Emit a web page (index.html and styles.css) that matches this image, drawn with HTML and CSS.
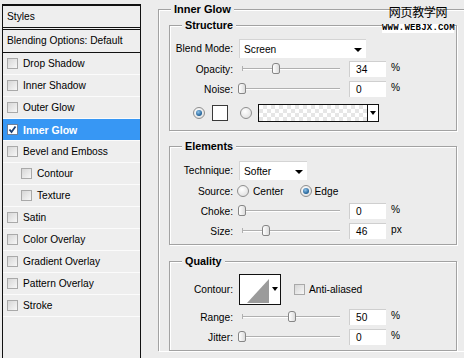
FILE: index.html
```html
<!DOCTYPE html>
<html>
<head>
  <meta charset="UTF-8">
  <title>Layer Style - Inner Glow</title>
  <link rel="stylesheet" href="styles.css">
</head>
<body>
  <div class="dialog">
    <div class="styles-list">
      <div class="list-head">Styles</div>
      <div class="list-blend">Blending Options: Default</div>
      <div class="list-item"><span class="check"></span>Drop Shadow</div>
      <div class="list-item"><span class="check"></span>Inner Shadow</div>
      <div class="list-item"><span class="check"></span>Outer Glow</div>
      <div class="list-item selected">
        <span class="check checked">
          <svg width="9" height="9" viewBox="0 0 9 9"><polyline points="1.5,4.5 3.5,7 7.5,1.5" fill="none" stroke="#1c3f73" stroke-width="1.8"/></svg>
        </span>Inner Glow
      </div>
      <div class="list-item"><span class="check"></span>Bevel and Emboss</div>
      <div class="list-item sub"><span class="check"></span>Contour</div>
      <div class="list-item sub"><span class="check"></span>Texture</div>
      <div class="list-item"><span class="check"></span>Satin</div>
      <div class="list-item"><span class="check"></span>Color Overlay</div>
      <div class="list-item"><span class="check"></span>Gradient Overlay</div>
      <div class="list-item"><span class="check"></span>Pattern Overlay</div>
      <div class="list-item"><span class="check"></span>Stroke</div>
    </div>

    <div class="options">
      <fieldset class="group outer">
        <legend>Inner Glow</legend>

        <fieldset class="group structure">
          <legend>Structure</legend>
          <div class="row tall">
            <span class="label">Blend Mode:</span>
            <div class="select blend-select">Screen<span class="arrow"></span></div>
          </div>
          <div class="row">
            <span class="label">Opacity:</span>
            <div class="slider"><span class="thumb" style="left:34px"></span></div>
            <div class="num">34</div>
            <span class="unit">%</span>
          </div>
          <div class="row">
            <span class="label">Noise:</span>
            <div class="slider"><span class="thumb" style="left:0px"></span></div>
            <div class="num">0</div>
            <span class="unit">%</span>
          </div>
          <div class="row fill-row">
            <span class="radio on"></span>
            <span class="swatch"></span>
            <span class="radio gap"></span>
            <div class="gradient"><span class="grad-arrow"><span class="arrow"></span></span></div>
          </div>
        </fieldset>

        <fieldset class="group elements">
          <legend>Elements</legend>
          <div class="row tall">
            <span class="label">Technique:</span>
            <div class="select tech-select">Softer<span class="arrow"></span></div>
          </div>
          <div class="row">
            <span class="label">Source:</span>
            <span class="radio first"></span>
            <span class="opt">Center</span>
            <span class="radio on second"></span>
            <span class="opt edge">Edge</span>
          </div>
          <div class="row">
            <span class="label">Choke:</span>
            <div class="slider"><span class="thumb" style="left:0px"></span></div>
            <div class="num">0</div>
            <span class="unit">%</span>
          </div>
          <div class="row">
            <span class="label">Size:</span>
            <div class="slider"><span class="thumb" style="left:24px"></span></div>
            <div class="num">46</div>
            <span class="unit">px</span>
          </div>
        </fieldset>

        <fieldset class="group quality">
          <legend>Quality</legend>
          <div class="row contour-row">
            <span class="label">Contour:</span>
            <div class="contour">
              <svg width="29" height="29" viewBox="0 0 29 29">
                <rect width="29" height="29" fill="#fff"/>
                <polygon points="7,28 29,4 29,28" fill="#9b9b9b"/>
              </svg>
              <span class="contour-drop"><span class="arrow"></span></span>
            </div>
            <span class="box-check"></span>
            <span class="opt">Anti-aliased</span>
          </div>
          <div class="row range-row">
            <span class="label">Range:</span>
            <div class="slider"><span class="thumb" style="left:50px"></span></div>
            <div class="num">50</div>
            <span class="unit">%</span>
          </div>
          <div class="row">
            <span class="label">Jitter:</span>
            <div class="slider"><span class="thumb" style="left:0px"></span></div>
            <div class="num">0</div>
            <span class="unit">%</span>
          </div>
        </fieldset>
      </fieldset>
    </div>

    <!-- site watermark stamped over the screenshot -->
    <div class="watermark">
      <div class="wm-cn">网页教学网</div>
      <div class="wm-url">WWW.WEBJX.COM</div>
    </div>
  </div>
</body>
</html>
```

FILE: styles.css
```css
html, body {
  margin: 0;
  padding: 0;
  height: 100%;
  background: #ececec;
  color: #000;
  font-family: 'Liberation Sans', Arial, sans-serif;
  font-size: 10.2px;
  overflow: hidden;
}
.dialog {
  position: relative;
  display: flex;
  height: 358px;
  overflow: hidden;
}

/* left: list of layer styles */
.styles-list {
  flex: none;
  width: 137px;
  height: 400px;
  margin: 4px 0 0 2px;
  border: 1px solid #111;
  border-top-width: 2px;
  background: #eeeeee;
}
.list-head {
  height: 21px;
  line-height: 21px;
  padding-left: 4px;
  border-bottom: 3px double #111;
}
.list-blend {
  height: 22px;
  line-height: 22px;
  padding-left: 4px;
  border-bottom: 1px solid #111;
}
.list-item {
  display: flex;
  align-items: center;
  height: 21px;
  padding-left: 4px;
  border-bottom: 1px solid #fbfbfb;
}
.list-item.sub {
  padding-left: 18px;
}
.list-item.selected {
  background: #3797f4;
  color: #fff;
  font-weight: bold;
  font-size: 10.5px;
}
.check {
  width: 9px;
  height: 9px;
  margin-right: 5px;
  border: 1px solid #a9a9a9;
  background: linear-gradient(135deg, #d6d6d6, #f7f7f7);
  display: flex;
}
.check.checked {
  background: #fff;
  border-color: #6f7f99;
}

/* right: options */
.options {
  flex: 1;
  padding-left: 17px;
}
.group {
  margin: 0;
  padding: 0;
  min-width: 0;
  border: 1px solid #a2a2a2;
  box-shadow: inset 1px 1px #fff, 1px 1px #fff;
}
.group legend {
  padding: 0 3px;
  margin-left: 12px;
  font-size: 10.8px;
  font-weight: bold;
  line-height: 13px;
  background: #ececec;
}
.outer {
  margin: 3px -40px 0 0;
  padding: 3px 0 0 10px;
  border-bottom: none;
}
.outer > legend {
  margin-left: 2px;
  font-size: 11px;
}
.structure, .elements, .quality {
  box-sizing: border-box;
  width: 288px;
}
.structure {
  padding: 6px 0 7px 0;
}
.elements {
  margin-top: 9px;
  padding: 7px 0 3px 0;
}
.quality {
  margin-top: 10px;
  padding: 5px 0 3px 0;
}

.row {
  display: flex;
  align-items: center;
  height: 20px;
}
.row.tall {
  height: 21px;
}
.label {
  width: 63px;
  flex: none;
  text-align: right;
}

.select {
  position: relative;
  box-sizing: border-box;
  height: 19px;
  line-height: 19px;
  margin-left: 6px;
  padding-left: 4px;
  background: #fff;
  border-top: 1px solid #d4d4d4;
  border-left: 1px solid #d4d4d4;
}
.blend-select { width: 127px; }
.tech-select { width: 68px; }
.arrow {
  width: 0;
  height: 0;
  border-left: 4px solid transparent;
  border-right: 4px solid transparent;
  border-top: 4px solid #000;
}
.select .arrow {
  position: absolute;
  right: 4px;
  top: 8px;
}

.slider {
  position: relative;
  flex: none;
  width: 102px;
  height: 12px;
  margin-left: 5px;
  background:
    linear-gradient(#b0b0b0, #b0b0b0) no-repeat 4px 3px / 1px 5px,
    linear-gradient(#b0b0b0, #b0b0b0) no-repeat 4px 5px / 98px 1px,
    linear-gradient(#fff, #fff) no-repeat 4px 6px / 98px 1px;
}
.thumb {
  position: absolute;
  top: 0;
  box-sizing: border-box;
  width: 8px;
  height: 11px;
  border: 1px solid #868686;
  border-radius: 3px 3px 2px 2px;
  background: linear-gradient(90deg, #fff, #dcdcdc);
}
.num {
  box-sizing: border-box;
  width: 37px;
  height: 16px;
  line-height: 15px;
  margin-left: 9px;
  padding-left: 6px;
  background: #fff;
  border-top: 1px solid #cfcfcf;
  border-left: 1px solid #cfcfcf;
}
.unit {
  margin-left: 5px;
  margin-top: -3px;
}

.fill-row {
  margin-top: 4px;
}
.radio {
  flex: none;
  position: relative;
  box-sizing: border-box;
  width: 12px;
  height: 12px;
  border-radius: 50%;
  border: 1px solid #8e8e8e;
  background: radial-gradient(circle at 40% 35%, #fff, #dadada);
}
.radio.on::after {
  content: '';
  position: absolute;
  left: 2px;
  top: 2px;
  width: 6px;
  height: 6px;
  border-radius: 50%;
  background: radial-gradient(circle at 40% 35%, #8fc3ea, #1f5f95 70%);
}
.fill-row .radio.on { margin-left: 23px; }
.fill-row .radio.gap { margin-left: 12px; }
.swatch {
  box-sizing: border-box;
  width: 16px;
  height: 16px;
  margin-left: 7px;
  background: #fff;
  border: 1px solid #3a3a3a;
}
.gradient {
  display: flex;
  justify-content: flex-end;
  box-sizing: border-box;
  width: 121px;
  height: 18px;
  margin-left: 6px;
  border: 1px solid #111;
  background-color: #fff;
  background-image:
    linear-gradient(45deg, #e6e6e6 25%, transparent 25%, transparent 75%, #e6e6e6 75%),
    linear-gradient(45deg, #e6e6e6 25%, transparent 25%, transparent 75%, #e6e6e6 75%);
  background-size: 8px 8px;
  background-position: 0 0, 4px 4px;
}
.grad-arrow {
  display: flex;
  align-items: center;
  justify-content: center;
  width: 10px;
  background: #fff;
  border-left: 1px solid #111;
}
.grad-arrow .arrow {
  border-left-width: 3px;
  border-right-width: 3px;
}

.radio.first { margin-left: 4px; }
.radio.second { margin-left: 16px; }
.opt { margin-left: 4px; }
.opt.edge { margin-left: 3px; }

.contour-row {
  height: 32px;
}
.contour {
  display: flex;
  margin-left: 6px;
  border: 1px solid #111;
  background: #fff;
}
.contour svg {
  display: block;
}
.contour-drop {
  display: flex;
  align-items: center;
  justify-content: center;
  width: 11px;
}
.contour-drop .arrow {
  border-left-width: 3px;
  border-right-width: 3px;
}
.box-check {
  box-sizing: border-box;
  width: 11px;
  height: 11px;
  margin-left: 13px;
  border: 1px solid #a9a9a9;
  background: linear-gradient(135deg, #d6d6d6, #f7f7f7);
}
.range-row {
  margin-top: 2px;
}

/* watermark overlay */
.watermark {
  position: absolute;
  left: 382px;
  top: 4px;
  width: 72px;
  text-align: center;
}
.wm-cn {
  font-family: 'Noto Sans CJK SC', sans-serif;
  font-size: 12px;
  line-height: 16px;
  letter-spacing: -0.3px;
}
.wm-url {
  margin-top: 4px;
  font-family: 'Liberation Mono', monospace;
  font-size: 9px;
  font-weight: bold;
  line-height: 9px;
  letter-spacing: 0.2px;
  background: #fff;
}
```
